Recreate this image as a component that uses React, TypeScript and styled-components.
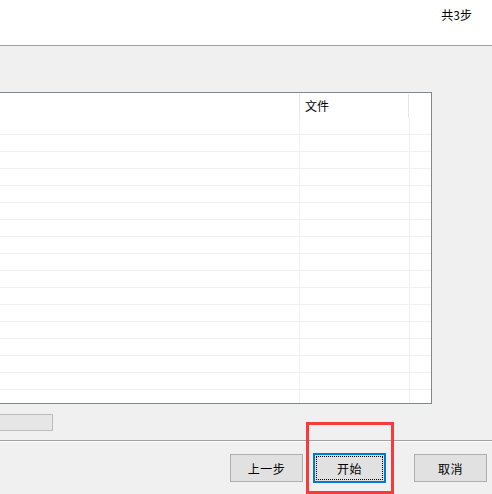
import React from 'react'
import styled, { createGlobalStyle } from 'styled-components'

const GlobalStyle = createGlobalStyle`
	html, body {
		margin: 0;
		padding: 0;
		background: #f0f0f0;
	}
	body {
		font-family: "Noto Sans CJK SC", "Microsoft YaHei", sans-serif;
		font-size: 12px;
		color: #000;
	}
`

const ROWS = 17

export default function App() {
	return (
		<>
			<GlobalStyle />
			<Window>
				<TopBar>
					<StepCount>共3步</StepCount>
				</TopBar>
				<Content>
					<ListView>
						<HeaderRow>
							<HeaderCell $width={300} />
							<HeaderCell $width={109}>文件</HeaderCell>
						</HeaderRow>
						<Body>
							{Array.from({ length: ROWS }).map((_, i) => (
								<Row key={i}>
									<Cell $width={300} />
									<Cell $width={110} />
									<Cell $last />
								</Row>
							))}
						</Body>
					</ListView>
					<Progress />
				</Content>
				<Footer>
					<Button>上一步</Button>
					<Button $primary>开始</Button>
					<Button $spaced>取消</Button>
				</Footer>
				<Highlight />
			</Window>
		</>
	)
}

const Window = styled.div`
	position: relative;
	width: 492px;
	height: 494px;
	overflow: hidden;
	display: flex;
	flex-direction: column;
	background: #f0f0f0;
`

const TopBar = styled.div`
	height: 45px;
	background: #fff;
	border-bottom: 1px solid #a0a0a0;
	display: flex;
	justify-content: flex-end;
	align-items: flex-start;
	padding: 6px 20px 0 0;
	box-sizing: border-box;
	height: 46px;
`

const StepCount = styled.span`
	line-height: 18px;
`

const Content = styled.div`
	padding-top: 46px;
	display: flex;
	flex-direction: column;
	border-bottom: 1px solid #a0a0a0;
	box-shadow: 0 1px 0 #fff;
	height: 395px;
	box-sizing: border-box;
`

const ListView = styled.div`
	width: 432px;
	height: 312px;
	box-sizing: border-box;
	border: 1px solid #828790;
	border-left: none;
	background: #fff;
	overflow: hidden;
	display: flex;
	flex-direction: column;
`

const HeaderRow = styled.div`
	display: flex;
	height: 25px;
	flex: none;
`

const HeaderCell = styled.div<{ $width: number }>`
	width: ${p => p.$width}px;
	box-sizing: border-box;
	height: 24px;
	margin-top: 1px;
	border-right: 1px solid #e5e5e5;
	padding-left: 5px;
	display: flex;
	align-items: center;
	padding-bottom: 2px;
`

const Body = styled.div`
	display: flex;
	flex-direction: column;
`

const Row = styled.div`
	display: flex;
	height: 17px;
	flex: none;
	box-sizing: border-box;
	border-bottom: 1px solid #f0f0f0;
`

const Cell = styled.div<{ $width?: number; $last?: boolean }>`
	width: ${p => (p.$width ? `${p.$width}px` : 'auto')};
	flex: ${p => (p.$last ? '1' : 'none')};
	box-sizing: border-box;
	border-right: ${p => (p.$last ? 'none' : '1px solid #f0f0f0')};
`

const Progress = styled.div`
	margin-top: 10px;
	width: 53px;
	height: 17px;
	box-sizing: border-box;
	background: #e6e6e6;
	border: 1px solid #bcbcbc;
	border-left: none;
`

const Footer = styled.div`
	display: flex;
	justify-content: flex-end;
	padding: 13px 5px 0 0;
	gap: 10px;
`

const Button = styled.div<{ $primary?: boolean; $spaced?: boolean }>`
	position: relative;
	width: 73px;
	height: 28px;
	box-sizing: border-box;
	margin-left: ${p => (p.$spaced ? '18px' : '0')};
	margin-top: ${p => (p.$primary ? '-1px' : '0')};
	height: ${p => (p.$primary ? '30px' : '28px')};
	background: #e1e1e1;
	border: ${p => (p.$primary ? '2px solid #0078d7' : '1px solid #adadad')};
	display: flex;
	align-items: center;
	justify-content: center;
	letter-spacing: 0.5px;

	${p =>
		p.$primary &&
		`
		&::after {
			content: '';
			position: absolute;
			inset: 1px;
			border: 1px dotted #000;
		}
	`}
`

const Highlight = styled.div`
	position: absolute;
	left: 306px;
	top: 422px;
	width: 88px;
	height: 72px;
	box-sizing: border-box;
	border: 3px solid #f53b3b;
	pointer-events: none;
`
